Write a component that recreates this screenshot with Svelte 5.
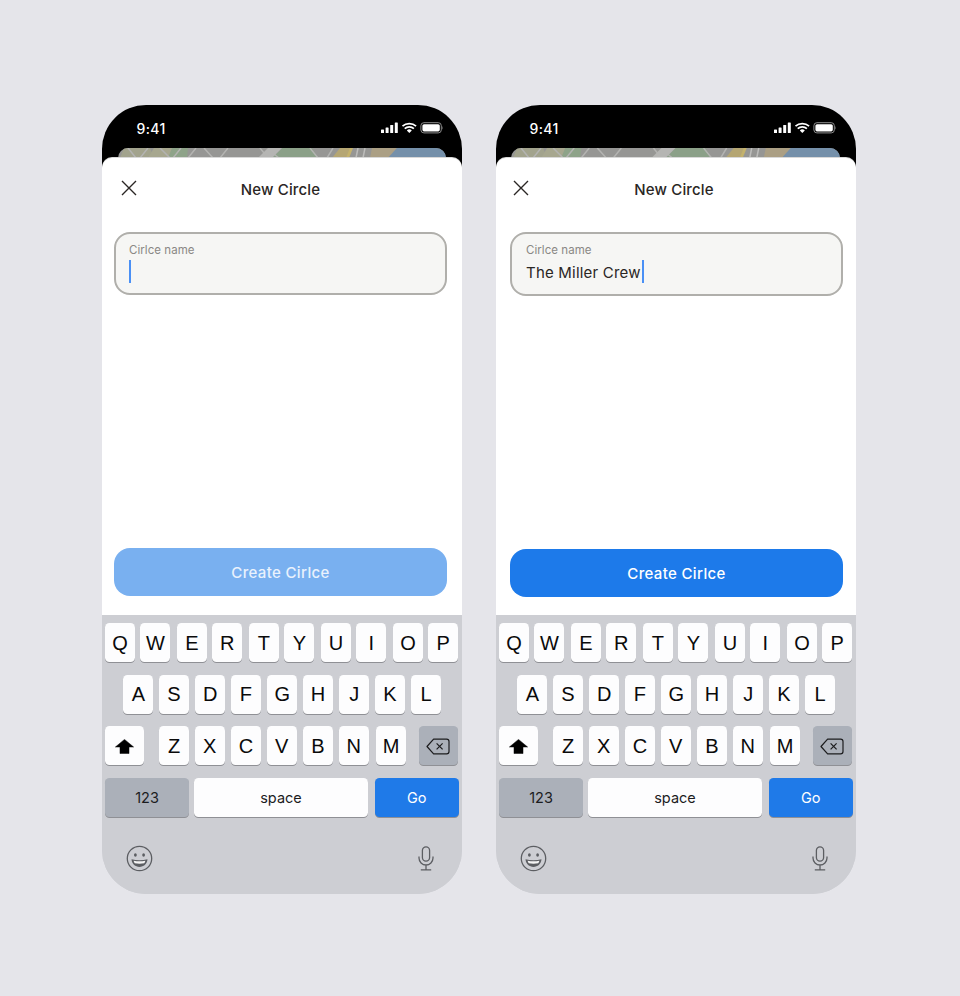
<script>
  const row1 = ['Q','W','E','R','T','Y','U','I','O','P'];
  const row2 = ['A','S','D','F','G','H','J','K','L'];
  const row3 = ['Z','X','C','V','B','N','M'];
</script>

{#snippet statusIcons()}
  <svg class="status-icons" width="62" height="12" viewBox="0 0 62 12">
    <rect x="0" y="7.5" width="3" height="3.5" rx=".6" fill="#fff"/>
    <rect x="4.6" y="5.5" width="3" height="5.5" rx=".6" fill="#fff"/>
    <rect x="9.2" y="3" width="3" height="8" rx=".6" fill="#fff"/>
    <rect x="13.8" y="0.5" width="3" height="10.5" rx=".6" fill="#fff"/>
    <path d="M21.5 4.2a10 10 0 0 1 13.6 0M23.7 6.6a6.8 6.8 0 0 1 9.2 0" fill="none" stroke="#fff" stroke-width="1.7"/>
    <path d="M28.3 10.9l-2.5-2.5a3.6 3.6 0 0 1 5 0z" fill="#fff"/>
    <rect x="39.9" y="0.7" width="20.4" height="10.2" rx="3" fill="none" stroke="#8e8e8e" stroke-width="1"/>
    <rect x="41.4" y="2.2" width="17.4" height="7.2" rx="1.6" fill="#fff"/>
    <path d="M61.2 4.2c.7.3.7 3 0 3.3z" fill="#8e8e8e"/>
  </svg>
{/snippet}

{#snippet mapStrip()}
  <svg class="map-art" viewBox="0 0 328 10" preserveAspectRatio="none">
    <rect width="328" height="10" fill="#969694"/>
    <path d="M6 0h26l4 10H2z" fill="#a2a38d"/>
    <path d="M36 0h22l-4 10H30z" fill="#a7a78f"/>
    <path d="M54 0h16l-1 10H50z" fill="#8ea389"/>
    <path d="M164 0h30l6 10h-46z" fill="#8ba088"/>
    <path d="M222 0h12l-6 10h-14z" fill="#b5a673"/>
    <path d="M232 0h3l-4 10h-3z" fill="#c4b26c"/>
    <path d="M254 0h25l-9 10h-18z" fill="#ab9f84"/>
    <path d="M279 0h49v10h-58z" fill="#7590aa"/>
    <g stroke="#b3b3b1" stroke-width="1.5" fill="none">
      <path d="M10 0l8 10M30 0l-8 10M42 0l10 10M63 0l-8 10M78 0l-8 10M86 0l9 10M110 0l-8 10M142 0l8 10M156 6l5 4M192 0l8 10M215 0l-6 10"/>
      <path d="M240 0l-2 10M247 0l-2 10" stroke="#bdbdbb"/>
    </g>
    <path d="M150 0h14l-10 10h-14z" fill="#b5b5b3"/>
  </svg>
{/snippet}

{#snippet phone(value, second)}
  <section class="phone" class:second>
    <div class="status">
      <span class="time">9:41</span>
      {@render statusIcons()}
    </div>
    <div class="map">{@render mapStrip()}</div>
    <div class="sheet">
      <header class="head">
        <svg class="close" width="16" height="16" viewBox="0 0 16 16">
          <path d="M1 1l14 14M15 1L1 15" stroke="#2a2624" stroke-width="1.4" fill="none"/>
        </svg>
        <h1 class="title">New Circle</h1>
      </header>
      <div class="field">
        <div class="label">Cirlce name</div>
        <div class="input">
          {#if value}<span class="typed">{value}</span>{/if}<span class="caret"></span>
        </div>
      </div>
      <button class="create">Create Cirlce</button>
    </div>
    <div class="keyboard">
      <div class="row r1">
        {#each row1 as k}<div class="key">{k}</div>{/each}
      </div>
      <div class="row r2">
        {#each row2 as k}<div class="key">{k}</div>{/each}
      </div>
      <div class="row r3">
        <div class="key wide shift">
          <svg width="19" height="15" viewBox="0 0 19 15"><path d="M9.5 .4L18.6 8H14v6.6H5V8H.4z" fill="#000" stroke="#000" stroke-width=".5" stroke-linejoin="round"/></svg>
        </div>
        {#each row3 as k}<div class="key">{k}</div>{/each}
        <div class="key wide dark del">
          <svg width="24" height="17" viewBox="0 0 24 17">
            <path d="M7.6 1.2h13a2.4 2.4 0 0 1 2.4 2.4v9.8a2.4 2.4 0 0 1-2.4 2.4h-13L1 8.5z" fill="none" stroke="#1c1c1e" stroke-width="1.2" stroke-linejoin="round"/>
            <path d="M10.6 5.4l6 6M16.6 5.4l-6 6" stroke="#1c1c1e" stroke-width="1.2"/>
          </svg>
        </div>
      </div>
      <div class="row r4">
        <div class="key fn dark">123</div>
        <div class="key space">space</div>
        <div class="key fn go">Go</div>
      </div>
      <div class="tools">
        <svg width="27" height="27" viewBox="0 0 27 27">
          <circle cx="13.5" cy="13.5" r="12.2" fill="none" stroke="#5c5e62" stroke-width="1.3"/>
          <ellipse cx="9.4" cy="10" rx="1.4" ry="1.8" fill="#5c5e62"/>
          <ellipse cx="17.6" cy="10" rx="1.4" ry="1.8" fill="#5c5e62"/>
          <path d="M5.5 14.3c5 1.3 11 1.3 16 0c-.4 5-4 7.6-8 7.6s-7.6-2.6-8-7.6z" fill="#5c5e62"/>
          <path d="M7.6 15.8c3.8.7 8 .7 11.8 0c-.3 1.2-.7 1.9-1.2 2.4c-3 .6-6.4.6-9.4 0c-.5-.5-.9-1.2-1.2-2.4z" fill="#f4f4f4"/>
        </svg>
        <svg width="16" height="25" viewBox="0 0 16 25">
          <rect x="4.4" y="0.8" width="7.2" height="14.4" rx="3.6" fill="none" stroke="#5c5e62" stroke-width="1.3"/>
          <path d="M1 10.5v1.5a7 7 0 0 0 14 0v-1.5M8 19v4.6M2.8 23.8h10.4" fill="none" stroke="#5c5e62" stroke-width="1.3"/>
        </svg>
      </div>
    </div>
  </section>
{/snippet}

<main class="page">
  {@render phone('', false)}
  {@render phone('The Miller Crew', true)}
</main>

<style>
  :global(body) { margin: 0; background: #e5e5ea; }
  .page {
    display: flex;
    gap: 34px;
    box-sizing: border-box;
    width: 960px;
    height: 996px;
    padding: 105px 0 0 102px;
    background: #e5e5ea;
    font-family: Inter, "Liberation Sans", sans-serif;
  }
  .phone {
    width: 360px;
    height: 789px;
    border-radius: 44px;
    overflow: hidden;
    background: linear-gradient(#000 0 80px, #cdced3 80px);
    display: flex;
    flex-direction: column;
  }
  .status {
    height: 43px;
    flex: none;
    display: flex;
    align-items: center;
    justify-content: space-between;
    padding: 3px 19px 0 34.6px;
    box-sizing: border-box;
    color: #fff;
  }
  .second .status { padding-left: 33.6px; padding-right: 20px; }
  .time { font-size: 14px; font-weight: 500; letter-spacing: .3px; }
  .status-icons { display: block; }
  .map {
    height: 10px;
    flex: none;
    margin: 0 16px;
    border-radius: 10px 10px 0 0;
    overflow: hidden;
  }
  .second .map { margin: 0 16px 0 15px; }
  .map-art { display: block; width: 100%; height: 10px; }
  .sheet {
    height: 457px;
    flex: none;
    box-sizing: border-box;
    background: #fff;
    border-radius: 10px 10px 0 0;
    padding: 0 15px 0 12px;
    display: flex;
    flex-direction: column;
    box-shadow: 0 -1px 0 #d8d8d8;
  }
  .second .sheet { padding: 0 13px 0 14px; }
  .head {
    height: 73.5px;
    flex: none;
    position: relative;
    display: flex;
    justify-content: center;
    padding-top: 23px;
    box-sizing: border-box;
  }
  .second .head { margin: 0 0 0 -1px; padding-right: 4px; }
  .close { position: absolute; left: 7px; top: 22px; }
  .second .close { left: 4px; }
  .title {
    margin: 0;
    font-size: 15px;
    line-height: 18px;
    font-weight: 450;
    color: #2a2624;
    letter-spacing: .15px;
  }
  .field {
    height: 63.5px;
    flex: none;
    box-sizing: border-box;
    border: 2px solid #b0afab;
    border-radius: 16px;
    background: #f6f6f4;
    padding: 9.5px 14px 0 13px;
  }
  .second .field { padding-left: 14px; height: 64px; }
  .label { font-size: 11.5px; line-height: 14px; color: #8a8885; letter-spacing: .05px; }
  .input { display: flex; align-items: center; height: 23px; margin-top: 3px; }
  .typed { font-size: 15px; color: #2a2624; letter-spacing: .2px; line-height: 25px; padding-top: 1px; }
  .caret { width: 2px; height: 23px; background: #4a90f5; flex: none; }
  .second .caret { margin-left: 1.5px; }
  .create {
    height: 48px;
    flex: none;
    margin-top: 253px;
    border: 0;
    border-radius: 16px;
    background: #79b0f0;
    color: #e9f2fd;
    font: 450 15px Inter, "Liberation Sans", sans-serif;
    letter-spacing: .35px;
    padding: 0;
  }
  .second .create { background: #1d7aea; color: #fff; margin-top: 253.5px; }
  .keyboard {
    flex: 1;
    background: #cdced3;
    padding-top: 8px;
    display: flex;
    flex-direction: column;
    gap: 12.6px;
  }
  .row { display: flex; height: 39px; }
  .key {
    flex: none;
    width: 30px;
    height: 39px;
    box-sizing: border-box;
    border-radius: 4.5px;
    background: #fdfdfe;
    box-shadow: 0 1px 0 #8f9095;
    color: #0a0a0a;
    display: flex;
    align-items: center;
    justify-content: center;
    padding-top: 1px;
    font: 400 20px "Liberation Sans", Arial, sans-serif;
  }
  .r1 { padding-left: 3px; gap: 5.33px; }
  .r1 .key:nth-child(odd):not(:first-child) { margin-left: 1.33px; }
  .r2 { padding-left: 21.3px; gap: 5.67px; }
  .r2 .key:nth-child(odd):not(:first-child) { margin-left: .67px; }
  .r3 { padding-left: 3px; gap: 5.67px; }
  .r3 .key:nth-child(even):not(:nth-child(2)) { margin-left: .67px; }
  .r3 .key:nth-child(2) { margin-left: 9.4px; }
  .r3 .key:nth-child(8):not(:nth-child(2)) { margin-left: 1.7px; }
  .wide { width: 39px; }
  .r3 .del { margin-left: auto; margin-right: 4.3px; }
  .dark { background: #abb0b9; }
  .r4 { padding-left: 3px; gap: 5px; }
  .fn { width: 84px; font: 400 14.5px Inter, "Liberation Sans", sans-serif; color: #1c1c1e; }
  .space { width: 174px; font: 400 14.5px Inter, "Liberation Sans", sans-serif; color: #1c1c1e; margin-right: 1.7px; }
  .go { background: #1f7ae8; color: #fff; width: 84px; }
  .tools {
    display: flex;
    justify-content: space-between;
    align-items: center;
    margin-top: 16px;
    padding: 0 28.5px 0 23.5px;
  }
</style>
